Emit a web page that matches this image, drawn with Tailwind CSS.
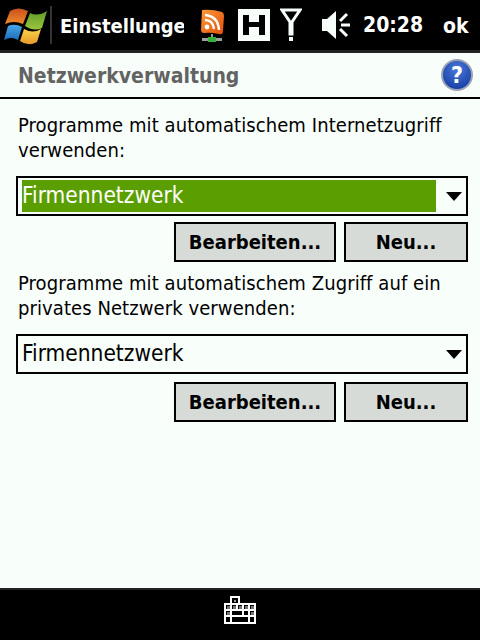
<!DOCTYPE html>
<html lang="en">
  <head>
    <meta charset="UTF-8" />
    <title>Netzwerkverwaltung</title>
    <script src="https://cdn.jsdelivr.net/npm/@tailwindcss/browser@4"></script>
  </head>
  <body class="w-[480px] h-[640px] overflow-hidden flex flex-col bg-[#f8fffb] text-black font-['DejaVu_Sans_Condensed','Noto_Sans',sans-serif]">
    <!-- Top bar -->
    <header class="h-[53px] shrink-0 bg-black border-b-[3px] border-[#222222] flex items-center text-white">
      <svg class="ml-[4px] w-[44px] h-[40px] shrink-0" viewBox="0 0 44 40">
        <defs>
          <linearGradient id="red" x1="0" y1="0" x2="0" y2="1"><stop offset="0" stop-color="#c8501c" /><stop offset="1" stop-color="#f08a2c" /></linearGradient>
          <linearGradient id="green" x1="0" y1="0" x2="0" y2="1"><stop offset="0" stop-color="#5f9a2a" /><stop offset="1" stop-color="#9cc63c" /></linearGradient>
          <linearGradient id="blue" x1="0" y1="0" x2="0" y2="1"><stop offset="0" stop-color="#4aa8e8" /><stop offset="1" stop-color="#1c6cb8" /></linearGradient>
          <linearGradient id="yellow" x1="0" y1="0" x2="0" y2="1"><stop offset="0" stop-color="#fbd34a" /><stop offset="1" stop-color="#e8982a" /></linearGradient>
          <linearGradient id="rss" x1="0" y1="0" x2="1" y2="1"><stop offset="0" stop-color="#fb9a3c" /><stop offset="1" stop-color="#e2500a" /></linearGradient>
          <radialGradient id="help" cx="0.5" cy="0.3" r="0.8"><stop offset="0" stop-color="#4a78d8" /><stop offset="1" stop-color="#0e359c" /></radialGradient>
        </defs>
        <path d="M6 6 Q14 1 24 6 L19 19 Q10 15 1 19 Z" fill="url(#red)" />
        <path d="M26 8 Q34 12 43 6 L38 23 Q30 27 21 21 Z" fill="url(#green)" />
        <path d="M4 21 Q11 18 18 22 L14 35 Q7 31 0 35 Z" fill="url(#blue)" />
        <path d="M20 24 Q29 29 37 24 L33 37 Q24 42 16 36 Z" fill="url(#yellow)" />
      </svg>
      <div class="ml-[2px] w-[2px] h-[38px] bg-[#333333] shrink-0"></div>
      <div class="ml-[8px] w-[124px] overflow-hidden whitespace-nowrap font-bold text-[20px] leading-[50px] pt-[1px] shrink-0">Einstellungen</div>
      <!-- rss -->
      <svg class="ml-[16px] w-[26px] h-[34px] mt-[2px] shrink-0" viewBox="0 0 26 34">
        <path d="M2 1 Q12 0 22 3 Q24 4 24 7 L23 22 Q23 26 19 25 Q10 23 4 24 Q1 24 1 21 Z" fill="url(#rss)" />
        <circle cx="7" cy="18" r="2.4" fill="#fff" />
        <path d="M5 11 Q13 11 14 20 M5 6 Q18 7 19 21" fill="none" stroke="#fff" stroke-width="2.4" />
        <rect x="11" y="25" width="2" height="4" fill="#999" />
        <rect x="2" y="29" width="20" height="3" fill="#9aa0a0" />
        <rect x="8" y="28" width="8" height="5" fill="#35b03a" />
      </svg>
      <!-- H -->
      <div class="ml-[12px] w-[32px] h-[32px] bg-[#f8fffb] flex items-center justify-center shrink-0">
        <svg class="w-[22px] h-[20px]" viewBox="0 0 22 20">
          <path d="M0 0H6V7H16V0H22V20H16V12H6V20H0Z" fill="#000" />
        </svg>
      </div>
      <!-- signal -->
      <svg class="ml-[10px] w-[22px] h-[34px] shrink-0" viewBox="0 0 22 34">
        <path d="M2 2H20L12 14V26H10V14Z" fill="none" stroke="#f8fffb" stroke-width="3" />
        <rect x="9" y="29" width="4" height="4" fill="#f8fffb" />
      </svg>
      <!-- speaker -->
      <svg class="ml-[20px] w-[28px] h-[28px] shrink-0" viewBox="0 0 28 28">
        <path d="M0 8H5L14 0V28L5 20H0Z" fill="#f8fffb" />
        <path d="M18 10L25 3M19 14H28M18 18L25 25" stroke="#f8fffb" stroke-width="3" fill="none" />
      </svg>
      <div class="ml-[13px] mt-[2px] w-[60px] font-bold text-[21px] whitespace-nowrap shrink-0">20:28</div>
      <div class="ml-[20px] mt-[3px] font-bold text-[21px] shrink-0">ok</div>
    </header>

    <!-- Title row -->
    <div class="h-[46px] shrink-0 border-b-2 border-black flex items-center justify-between pl-[18px] pr-[7px]">
      <h1 class="mt-[3px] font-bold text-[21px] text-[#636363]">Netzwerkverwaltung</h1>
      <svg class="w-[32px] h-[32px]" viewBox="0 0 32 32">
        <circle cx="16" cy="16" r="15" fill="url(#help)" stroke="#9aa3b5" stroke-width="2" />
        <text x="16" y="24" text-anchor="middle" fill="#fff" font-size="23" font-weight="700">?</text>
      </svg>
    </div>

    <main class="flex-1 pl-[16px] pr-[12px] pt-[14px]">
      <p class="pl-[2px] text-[20px] tracking-[0.08px] leading-[25px] h-[48px]">Programme mit automatischem Internetzugriff verwenden:</p>
      <div class="mt-[15px] h-[40px] border-2 border-black flex items-center pl-[4px] pr-[4px]">
        <div class="w-[414px] h-[32px] bg-[#5a9e00] text-white text-[22.5px] leading-[30px] shrink-0">Firmennetzwerk</div>
        <div class="ml-auto w-0 h-0 border-x-[8px] border-t-[9px] border-x-transparent border-t-black"></div>
      </div>
      <div class="mt-[6px] flex justify-end gap-[8px]">
        <button class="w-[162px] h-[40px] border-2 border-black bg-[#d6dbd8] font-bold text-[20px]">Bearbeiten...</button>
        <button class="w-[124px] h-[40px] border-2 border-black bg-[#d6dbd8] font-bold text-[20px]">Neu...</button>
      </div>

      <p class="mt-[9px] pl-[2px] text-[20px] tracking-[0.08px] leading-[25px] h-[48px]">Programme mit automatischem Zugriff auf ein privates Netzwerk verwenden:</p>
      <div class="mt-[15px] h-[40px] border-2 border-black flex items-center pl-[4px] pr-[4px]">
        <div class="text-[22.5px] leading-[28px] mb-[2px]">Firmennetzwerk</div>
        <div class="ml-auto w-0 h-0 border-x-[8px] border-t-[9px] border-x-transparent border-t-black"></div>
      </div>
      <div class="mt-[8px] flex justify-end gap-[8px]">
        <button class="w-[162px] h-[40px] border-2 border-black bg-[#d6dbd8] font-bold text-[20px]">Bearbeiten...</button>
        <button class="w-[124px] h-[40px] border-2 border-black bg-[#d6dbd8] font-bold text-[20px]">Neu...</button>
      </div>
    </main>

    <!-- Bottom bar -->
    <footer class="h-[52px] shrink-0 bg-black border-t-2 border-[#222222] flex justify-center">
      <svg class="mt-[6px] w-[32px] h-[28px]" viewBox="0 0 32 28">
        <path d="M7 8V1H15V8M1 8H31V27H1ZM1 14H31M1 20H31M7 8V27M13 8V14M19 8V20M25 8V27M7 20V27" fill="none" stroke="#fff" stroke-width="2" />
        <rect x="10" y="4" width="2" height="2" fill="#999" />
        <rect x="3" y="10" width="3" height="3" fill="#777" />
        <rect x="9" y="10" width="3" height="3" fill="#777" />
        <rect x="15" y="10" width="3" height="3" fill="#777" />
        <rect x="21" y="10" width="3" height="3" fill="#777" />
        <rect x="27" y="10" width="3" height="3" fill="#777" />
        <rect x="3" y="16" width="3" height="3" fill="#777" />
        <rect x="27" y="16" width="3" height="3" fill="#777" />
      </svg>
    </footer>
  </body>
</html>
